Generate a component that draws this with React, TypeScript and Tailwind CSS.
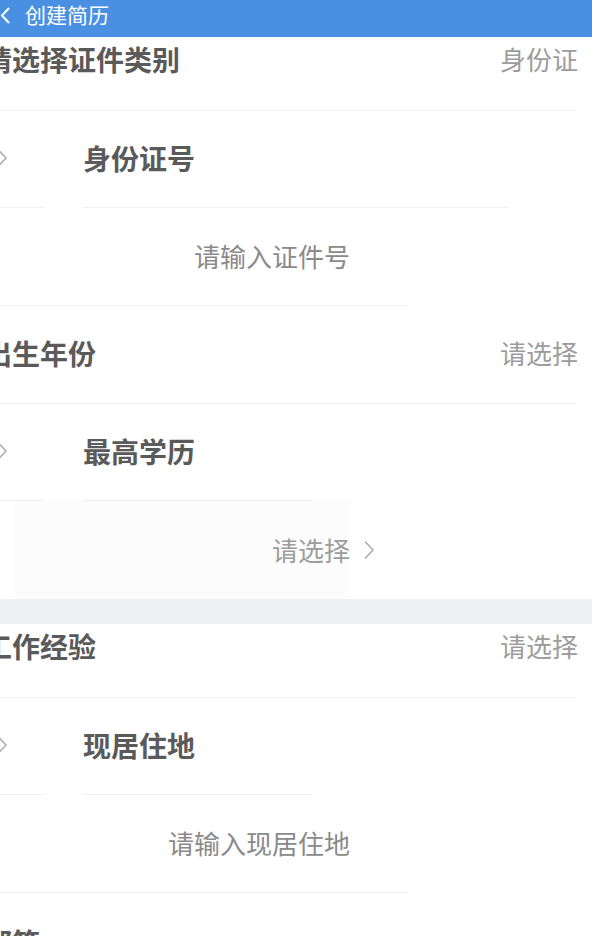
const font = { fontFamily: '"Noto Sans CJK SC", "Noto Sans", sans-serif' };

function Chevron({ className }: { className?: string }) {
  return (
    <svg width="12" height="22" viewBox="0 0 12 22" className={className}>
      <polyline points="2,2.5 10,11 2,19.5" fill="none" stroke="#ababab" strokeWidth="1.5" />
    </svg>
  );
}

function Line({ segments }: { segments: [number, number][] }) {
  return (
    <div className="flex h-px">
      {segments.map(([ml, w], i) => (
        <div key={i} className="h-px bg-[#efefef]" style={{ marginLeft: ml, width: w }} />
      ))}
    </div>
  );
}

function SelectRow({ label, value, cut }: { label: string; value: string; cut?: boolean }) {
  return (
    <>
      <div
        className={
          cut
            ? 'flex h-[73px] items-start justify-between pt-[6px] pr-[14px]'
            : 'flex h-[97px] items-center justify-between pr-[14px] pb-[3px]'
        }
      >
        <span className="-ml-[16px] text-[28px] leading-[32px] font-bold text-[#5a5a5a]">{label}</span>
        <span className="text-[26px] leading-[32px] text-[#9c9c9c]">{value}</span>
      </div>
      <Line segments={[[0, 577]]} />
    </>
  );
}

function LabelRow({ label, line }: { label: string; line: number }) {
  return (
    <>
      <div className="flex h-[96px] items-center pb-[2px]">
        <Chevron className="-ml-[4px]" />
        <span className="ml-[75px] text-[28px] leading-[32px] font-bold text-[#5a5a5a]">{label}</span>
      </div>
      <Line segments={[[0, 44], [39, line]]} />
    </>
  );
}

function InputRow({ text }: { text: string }) {
  return (
    <>
      <div className="flex h-[97px] items-center pb-[2px]">
        <div className="flex w-[350px] items-center justify-end">
          <span className="text-[26px] leading-[32px] text-[#8a8a8a]">{text}</span>
        </div>
      </div>
      <Line segments={[[0, 408]]} />
    </>
  );
}

export default function App() {
  return (
    <div className="h-[936px] w-[592px] overflow-hidden bg-white" style={font}>
      <div className="flex h-[37px] items-start bg-[#4a90e2] pt-[2px]">
        <svg width="12" height="20" viewBox="0 0 12 20" className="mt-[4px]">
          <polyline points="9,2 2,9.5 9,17" fill="none" stroke="#ffffff" strokeWidth="2" />
        </svg>
        <span className="ml-[13px] text-[21px] leading-[24px] text-white">创建简历</span>
      </div>

      <SelectRow label="请选择证件类别" value="身份证" cut />
      <LabelRow label="身份证号" line={425} />
      <InputRow text="请输入证件号" />

      <SelectRow label="出生年份" value="请选择" />
      <LabelRow label="最高学历" line={230} />
      <div className="flex h-[98px] items-center">
        <div className="ml-[15px] flex h-full w-[335px] items-center justify-end bg-[#fcfcfc]">
          <span className="text-[26px] leading-[32px] text-[#9c9c9c]">请选择</span>
        </div>
        <Chevron className="ml-[13px]" />
      </div>

      <div className="h-[25px] bg-[#eff0f2]" />

      <SelectRow label="工作经验" value="请选择" cut />
      <LabelRow label="现居住地" line={230} />
      <InputRow text="请输入现居住地" />

      <div className="flex h-[97px] items-center">
        <span className="-ml-[16px] text-[28px] leading-[32px] font-bold text-[#5a5a5a]">邮箱</span>
      </div>
    </div>
  );
}
